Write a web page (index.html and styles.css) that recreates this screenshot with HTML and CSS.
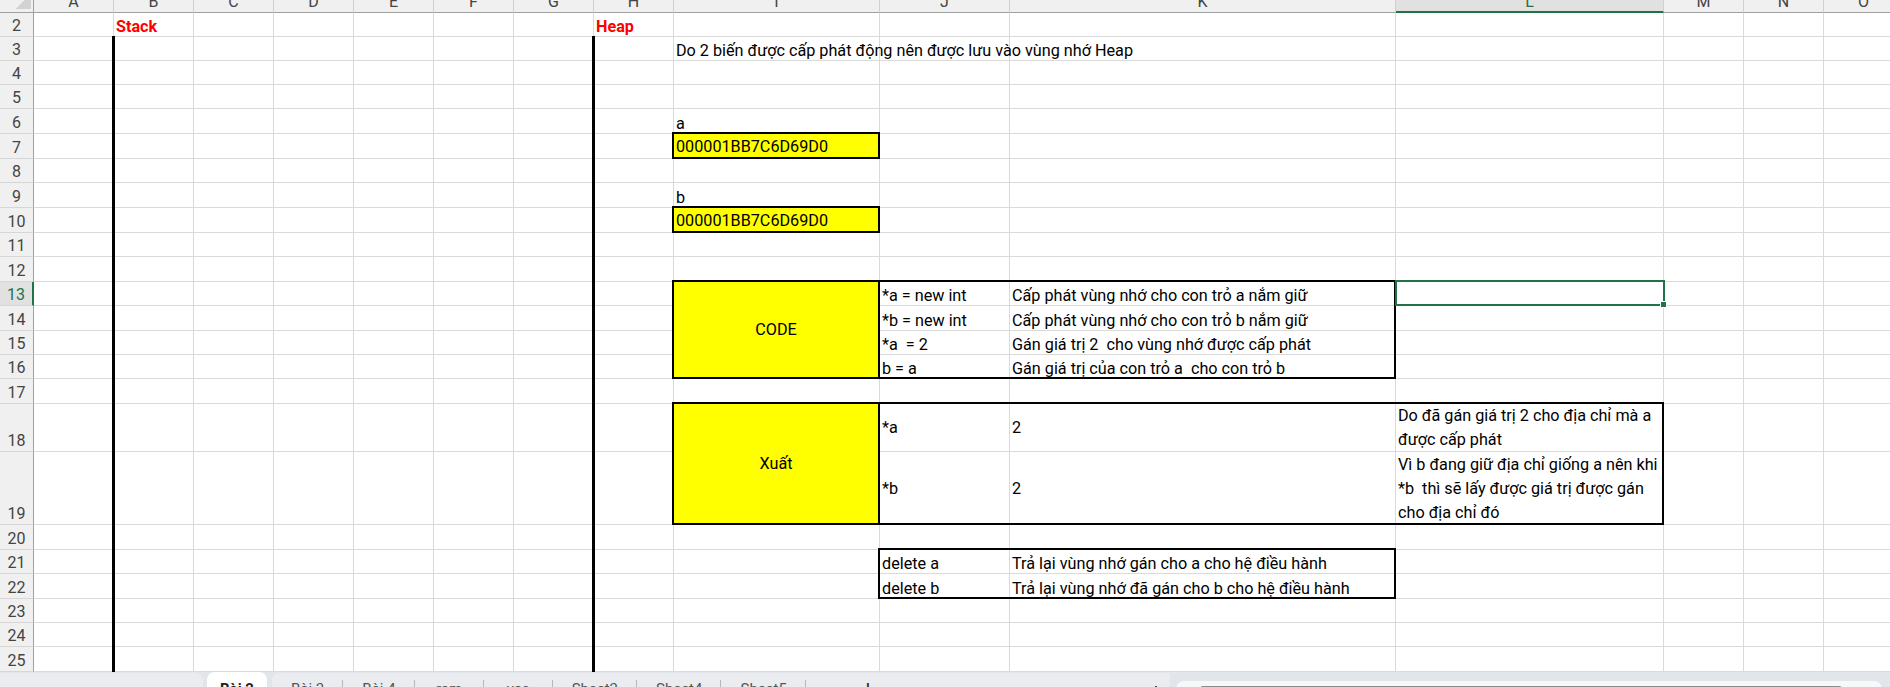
FILE: index.html
```html
<!DOCTYPE html>
<html lang="vi">
<head>
<meta charset="utf-8">
<title>Bài 2</title>
<link rel="stylesheet" href="styles.css">
</head>
<body>
<div class="sheet">
  <div class="corner"><span class="tri"></span></div>
  <div class="colheads">
    <div>A</div><div>B</div><div>C</div><div>D</div><div>E</div><div>F</div><div>G</div><div>H</div><div>I</div><div>J</div><div>K</div><div class="sel">L</div><div>M</div><div>N</div><div>O</div>
  </div>
  <div class="rowheads">
    <div>2</div><div>3</div><div>4</div><div>5</div><div>6</div><div>7</div><div>8</div><div>9</div><div>10</div><div>11</div><div>12</div><div class="sel">13</div><div>14</div><div>15</div><div>16</div><div>17</div><div>18</div><div>19</div><div>20</div><div>21</div><div>22</div><div>23</div><div>24</div><div>25</div>
  </div>
  <div class="cells">
    <div class="vlines"><i></i><i></i><i></i><i></i><i></i><i></i><i></i><i></i><i></i><i></i><i></i><i></i><i></i><i></i><i></i></div>
    <div class="hlines"><i></i><i></i><i></i><i></i><i></i><i></i><i></i><i></i><i></i><i></i><i></i><i></i><i></i><i></i><i></i><i></i><i></i><i></i><i></i><i></i><i></i><i></i><i></i><i></i></div>

    <div class="txt red r2 cB">Stack</div>
    <div class="txt red r2 cH">Heap</div>
    <div class="vthick r3-25 cB"></div>
    <div class="vthick r3-25 cH"></div>

    <div class="txt r3 cI">Do 2 biến được cấp phát động nên được lưu vào vùng nhớ Heap</div>
    <div class="txt r6 cI">a</div>
    <div class="txt box fill r7 cI">000001BB7C6D69D0</div>
    <div class="txt r9 cI">b</div>
    <div class="txt box fill r10 cI">000001BB7C6D69D0</div>

    <div class="box fill merged r13-16 cI">CODE</div>
    <div class="box r13-16 cJ-K"></div>
    <div class="txt r13 cJ">*a = new int</div>
    <div class="txt r13 cK">Cấp phát vùng nhớ cho con trỏ a nắm giữ</div>
    <div class="txt r14 cJ">*b = new int</div>
    <div class="txt r14 cK">Cấp phát vùng nhớ cho con trỏ b nắm giữ</div>
    <div class="txt r15 cJ">*a  = 2</div>
    <div class="txt r15 cK">Gán giá trị 2  cho vùng nhớ được cấp phát</div>
    <div class="txt r16 cJ">b = a</div>
    <div class="txt r16 cK">Gán giá trị của con trỏ a  cho con trỏ b</div>

    <div class="box fill merged r18-19 cI">Xuất</div>
    <div class="box r18-19 cJ-L"></div>
    <div class="txt mid r18 cJ">*a</div>
    <div class="txt mid r18 cK">2</div>
    <div class="txt mid r18 cL"><span class="ln">Do đã gán giá trị 2 cho địa chỉ mà a</span><span class="ln">được cấp phát</span></div>
    <div class="txt mid r19 cJ">*b</div>
    <div class="txt mid r19 cK">2</div>
    <div class="txt mid r19 cL"><span class="ln">Vì b đang giữ địa chỉ giống a nên khi</span><span class="ln">*b  thì sẽ lấy được giá trị được gán</span><span class="ln">cho địa chỉ đó</span></div>

    <div class="box r21-22 cJ-K"></div>
    <div class="txt r21 cJ">delete a</div>
    <div class="txt r21 cK">Trả lại vùng nhớ gán cho a cho hệ điều hành</div>
    <div class="txt r22 cJ">delete b</div>
    <div class="txt r22 cK">Trả lại vùng nhớ đã gán cho b cho hệ điều hành</div>

    <div class="selcell r13 cL"><span class="handle"></span></div>
  </div>
</div>

<div class="tabbar">
  <div class="nav"><span>‹</span><span>›</span></div>
  <div class="tab active">Bài 2</div>
  <div class="tabs">
    <div class="tab">Bài 3</div>
    <div class="tab">Bài 4</div>
    <div class="tab">ram</div>
    <div class="tab">vec</div>
    <div class="tab">Sheet3</div>
    <div class="tab">Sheet4</div>
    <div class="tab">Sheet5</div>
    <div class="add">+</div>
    <div class="split"></div>
  </div>
  <div class="hscroll"><span class="thumb"></span></div>
</div>
</body>
</html>
```

FILE: styles.css
```css
* { box-sizing: border-box; }

html, body { margin: 0; padding: 0; }

body {
  width: 1890px;
  height: 687px;
  overflow: hidden;
  background: #fff;
  color: #000;
  font-family: Roboto, "Liberation Sans", Arial, sans-serif;
}

.sheet {
  --cols: 80px 80px 80px 80px 80px 80px 80px 80px 206px 130px 386px 268px 80px 80px 80px;
  --rows: 24px 24px 24px 24px 25px 25px 24px 25px 25px 24px 25px 24px 25px 24px 24px 25px 48px 73px 25px 24px 25px 24px 24px 25px;
  display: grid;
  grid-template-columns: 34px var(--cols);
  grid-template-rows: 25px var(--rows);
  width: 1904px;
  margin-top: -12px;
}

/* headers */
.corner {
  grid-row: 1;
  grid-column: 1;
  background: #f0f0f0;
  border-right: 1px solid #a0a0a0;
  border-bottom: 1px solid #a0a0a0;
  display: flex;
  justify-content: flex-end;
  align-items: flex-end;
  padding: 0 2px 3px 0;
}
.tri {
  width: 15px;
  height: 15px;
  background: linear-gradient(to bottom right, transparent 50%, #d2d2d2 50%);
}

.colheads {
  grid-row: 1;
  grid-column: 2 / -1;
  display: grid;
  grid-template-columns: var(--cols);
}
.colheads > div {
  background: #f0f0f0;
  border-right: 1px solid #d0d0d0;
  border-bottom: 1px solid #a0a0a0;
  text-align: center;
  color: #444;
  font-size: 16px;
  line-height: 25px;
  padding-top: 1px;
  overflow: hidden;
}
.colheads > .sel {
  background: #e1e1e1;
  color: #217346;
  border-bottom: 2px solid #217346;
}

.rowheads {
  grid-column: 1;
  grid-row: 2 / -1;
  display: grid;
  grid-template-rows: var(--rows);
}
.rowheads > div {
  background: #f0f0f0;
  border-right: 1px solid #a0a0a0;
  border-bottom: 1px solid #d6d6d6;
  display: flex;
  align-items: flex-end;
  justify-content: center;
  padding-bottom: 1px;
  color: #444;
  font-size: 16px;
  line-height: 19px;
}
.rowheads > .sel {
  background: #e1e1e1;
  color: #217346;
  border-right: 2px solid #217346;
}

/* cell area */
.cells {
  grid-column: 2 / -1;
  grid-row: 2 / -1;
  display: grid;
  grid-template-columns: var(--cols);
  grid-template-rows: var(--rows);
}
.vlines, .hlines {
  grid-area: 1 / 1 / -1 / -1;
  display: grid;
}
.vlines { grid-template-columns: var(--cols); }
.hlines { grid-template-rows: var(--rows); }
.vlines i { border-right: 1px solid #dadada; }
.hlines i { border-bottom: 1px solid #dadada; }

/* placement */
.r2 { grid-row: 1; }
.r3 { grid-row: 2; }
.r6 { grid-row: 5; }
.r7 { grid-row: 6; }
.r9 { grid-row: 8; }
.r10 { grid-row: 9; }
.r13 { grid-row: 12; }
.r14 { grid-row: 13; }
.r15 { grid-row: 14; }
.r16 { grid-row: 15; }
.r18 { grid-row: 17; }
.r19 { grid-row: 18; }
.r21 { grid-row: 20; }
.r22 { grid-row: 21; }
.r3-25 { grid-row: 2 / -1; }
.r13-16 { grid-row: 12 / 16; }
.r18-19 { grid-row: 17 / 19; }
.r21-22 { grid-row: 20 / 22; }

.cB { grid-column: 2; }
.cH { grid-column: 8; }
.cI { grid-column: 9; }
.cJ { grid-column: 10; }
.cK { grid-column: 11; }
.cL { grid-column: 12; }
.cJ-K { grid-column: 10 / 12; }
.cJ-L { grid-column: 10 / 13; }

/* content */
.txt {
  padding: 0 2px;
  white-space: pre;
  font-size: 16.2px;
  line-height: 20px;
  align-self: end;
}
.red { color: #ff0000; font-weight: bold; }
.mid { align-self: center; line-height: 24px; }
.ln { display: block; }

.vthick {
  border-left: 3px solid #000;
  margin: -1px 0 0 -2px;
}

.fill { background: #ffff00; }
.box {
  align-self: stretch;
  border: 2px solid #000;
  margin: -2px 0 0 -2px;
  display: flex;
  align-items: flex-end;
}
.merged {
  align-items: center;
  justify-content: center;
  font-size: 16.2px;
}

.selcell {
  border: 2px solid #217346;
  margin: -2px -1px 0 -1px;
  position: relative;
}
.handle {
  position: absolute;
  right: -4px;
  bottom: -4px;
  width: 7px;
  height: 7px;
  background: #217346;
  border: 1px solid #fff;
}

/* sheet tab bar */
.tabbar {
  display: flex;
  align-items: flex-start;
  height: 40px;
  background: #e2e5e9;
  font-size: 15px;
  color: #555;
  line-height: 18px;
}
.nav {
  width: 203px;
  height: 40px;
  margin-top: 1px;
  background: #eaecef;
  border-top-right-radius: 8px;
  display: flex;
  gap: 30px;
  padding: 8px 0 0 34px;
  color: #8a8f96;
  font-size: 18px;
}
.tab {
  height: 40px;
  padding: 7px 19px 0;
  min-width: 69px;
  text-align: center;
  white-space: nowrap;
}
.tab.active {
  margin-left: 4px;
  width: 60px;
  min-width: 0;
  padding: 8px 0 0;
  background: #fff;
  border-radius: 8px 8px 0 0;
  font-weight: 700;
  color: #222;
}
.tabs {
  margin-left: 5px;
  margin-top: 1px;
  width: 898px;
  height: 40px;
  background: #eaecef;
  border-top-left-radius: 8px;
  display: flex;
}
.tabs .tab {
  background: linear-gradient(#b5b9be, #b5b9be) right 7px / 1px 100% no-repeat;
}
.add {
  width: 124px;
  text-align: center;
  padding-top: 6px;
  font-size: 20px;
  color: #333;
}
.split {
  margin-left: auto;
  margin-right: 13px;
  margin-top: 13px;
  width: 2px;
  height: 10px;
  background: #444;
}
.hscroll {
  margin-left: 6px;
  margin-top: 9px;
  width: 706px;
  height: 30px;
  background: #f7f8f9;
  border-radius: 8px;
  padding: 5px 0 0 24px;
}
.thumb {
  display: block;
  width: 642px;
  height: 6px;
  border-radius: 3px;
  background: #8a8a8a;
}
```
